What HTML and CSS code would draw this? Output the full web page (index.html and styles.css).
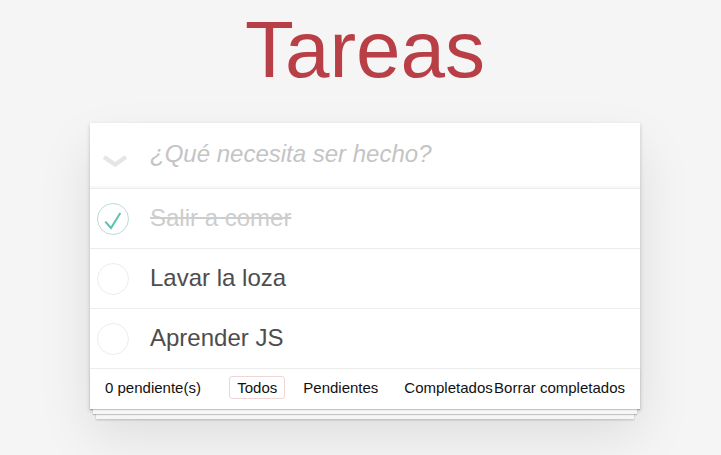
FILE: index.html
```html
<!DOCTYPE html>
<html lang="es">
<head>
<meta charset="utf-8">
<title>Tareas</title>
<link rel="stylesheet" href="styles.css">
</head>
<body>
<div class="page">
  <h1 class="title">Tareas</h1>
  <section class="app">
    <header class="head">
      <span class="toggle-all">
        <svg width="26" height="16" viewBox="0 0 26 16"><polyline points="2,3 13,10.5 24,3" fill="none" stroke="#e6e6e6" stroke-width="4.5"/></svg>
      </span>
      <span class="new-todo">¿Qué necesita ser hecho?</span>
    </header>
    <ul class="list">
      <li class="item done">
        <span class="toggle">
          <svg width="40" height="40" viewBox="0 0 40 40"><circle cx="20" cy="20" r="15.5" fill="none" stroke="#bddad5" stroke-width="1"/><polyline points="12.3,22.7 18,29 27.3,14" fill="none" stroke="#5dc2af" stroke-width="2"/></svg>
        </span>
        <span class="label">Salir a comer</span>
      </li>
      <li class="item">
        <span class="toggle">
          <svg width="40" height="40" viewBox="0 0 40 40"><circle cx="20" cy="20" r="15.5" fill="none" stroke="#ededed" stroke-width="1"/></svg>
        </span>
        <span class="label">Lavar la loza</span>
      </li>
      <li class="item">
        <span class="toggle">
          <svg width="40" height="40" viewBox="0 0 40 40"><circle cx="20" cy="20" r="15.5" fill="none" stroke="#ededed" stroke-width="1"/></svg>
        </span>
        <span class="label">Aprender JS</span>
      </li>
    </ul>
    <footer class="foot">
      <span class="count">0 pendiente(s)</span>
      <ul class="filters">
        <li><a class="filter selected">Todos</a></li>
        <li><a class="filter">Pendientes</a></li>
        <li><a class="filter">Completados</a></li>
      </ul>
      <span class="clear">Borrar completados</span>
    </footer>
  </section>
</div>
</body>
</html>
```
FILE: styles.css
```css
html, body { margin: 0; padding: 0; }
body {
  background: #f5f5f5;
  font-family: "Liberation Sans", Arial, sans-serif;
  color: #111;
  padding-left: 9px;
  min-height: 100vh;
}
.page {
  width: 550px;
  margin: 0 auto;
  padding-bottom: 40px;
}
.title {
  margin: 10px 0 33px;
  font-size: 80px;
  line-height: 80px;
  font-weight: normal;
  text-align: center;
  color: #b83f45;
}
.app {
  background: #fff;
  box-shadow: 0 2px 4px 0 rgba(0,0,0,0.2), 0 25px 50px 0 rgba(0,0,0,0.1);
}
.head {
  display: flex;
  align-items: center;
  height: 66px;
  box-shadow: inset 0 -2px 1px rgba(0,0,0,0.03);
  border-bottom: 1px solid #ededed;
  box-sizing: border-box;
}
.toggle-all {
  width: 60px;
  display: flex;
  justify-content: center;
  padding-top: 13px;
  padding-right: 10px;
  box-sizing: border-box;
}
.toggle-all svg { display: block; }
.new-todo {
  font-size: 24px;
  font-style: italic;
  color: #c4c4c4;
  line-height: 1.4;
  padding-bottom: 3px;
}
.list { list-style: none; margin: 0; padding: 0; }
.item {
  display: flex;
  align-items: center;
  height: 59px;
  border-bottom: 1px solid #ededed;
}
.toggle {
  width: 60px;
  display: flex;
  padding-left: 3px;
  box-sizing: border-box;
}
.toggle svg { display: block; }
.label {
  font-size: 24px;
  line-height: 1.2;
  color: #4d4d4d;
}
.done .label {
  color: #cdcdcd;
  text-decoration: line-through;
}
.foot {
  display: grid;
  align-items: center;
  height: 40px;
  box-sizing: border-box;
  padding: 0 15px 3px;
  font-size: 15px;
  color: #111;
  box-shadow: 0 1px 1px rgba(0,0,0,0.2), 0 8px 0 -3px #f6f6f6, 0 9px 1px -3px rgba(0,0,0,0.2), 0 16px 0 -6px #f6f6f6, 0 17px 2px -6px rgba(0,0,0,0.2);
}
.count, .filters, .clear { grid-area: 1 / 1; }
.count { justify-self: start; }
.clear { justify-self: end; }
.filters {
  justify-self: center;
  list-style: none;
  margin: 0;
  padding: 0;
  display: flex;
  gap: 4px;
}
.filter {
  display: block;
  margin: 0 3px;
  padding: 3px 7px;
  line-height: 15px;
  border: 1px solid transparent;
  border-radius: 3px;
}
.filter.selected { border-color: rgba(175,47,47,0.2); }
```
